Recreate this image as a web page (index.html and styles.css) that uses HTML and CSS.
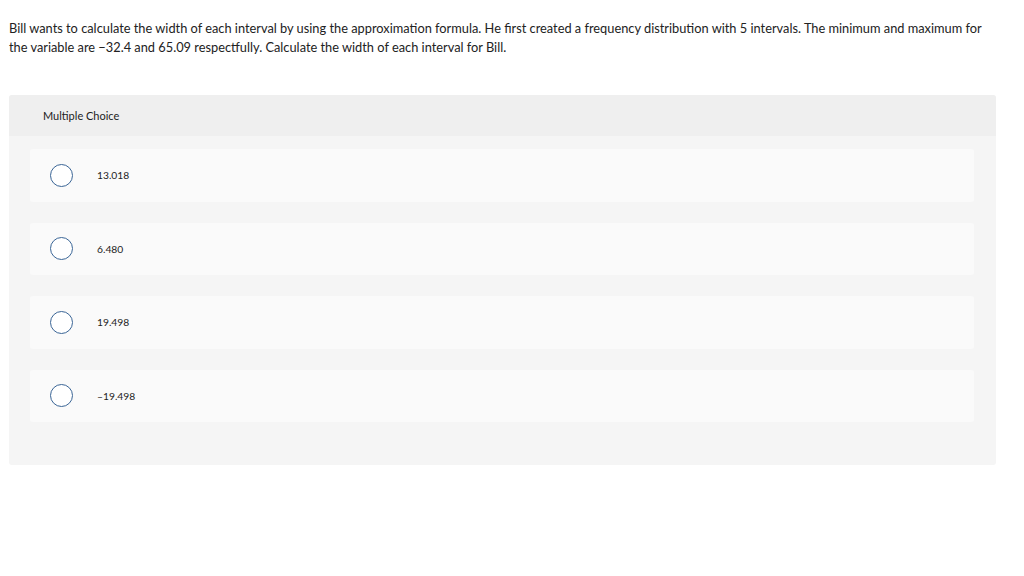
FILE: index.html
```html
<!DOCTYPE html>
<html>
<head>
<meta charset="utf-8">
<link rel="stylesheet" href="styles.css">
</head>
<body>
<div class="page">
  <p class="question">Bill wants to calculate the width of each interval by using the approximation formula. He first created a frequency distribution with 5 intervals. The minimum and maximum for the variable are &minus;32.4 and 65.09 respectfully. Calculate the width of each interval for Bill.</p>
  <div class="panel">
    <div class="panel-head">Multiple Choice</div>
    <div class="panel-body">
      <div class="option"><span class="radio"></span><span class="label">13.018</span></div>
      <div class="option"><span class="radio"></span><span class="label">6.480</span></div>
      <div class="option"><span class="radio"></span><span class="label">19.498</span></div>
      <div class="option"><span class="radio"></span><span class="label">&ndash;19.498</span></div>
    </div>
  </div>
</div>
</body>
</html>
```
FILE: styles.css
```css
html, body { margin: 0; padding: 0; background: #fff; }
body { font-family: "Lato", "Open Sans", sans-serif; color: #222; }
.page { padding: 0 28px 0 9px; }
.question {
  margin: 0;
  padding-top: 19px;
  font-size: 12.8px;
  line-height: 19px;
  color: #222;
}
.panel {
  margin-top: 38px;
  width: 987px;
  border-radius: 3px;
  overflow: hidden;
  background: #f5f5f5;
}
.panel-head {
  height: 41px;
  background: #efefef;
  display: flex;
  align-items: center;
  padding-left: 34px;
  font-size: 11px;
  color: #222;
}
.panel-body {
  padding: 13px 22px 43px 21px;
  display: flex;
  flex-direction: column;
  gap: 21px;
}
.option {
  height: 52.5px;
  background: #fafafa;
  border-radius: 3px;
  display: flex;
  align-items: center;
  padding-left: 20px;
}
.radio {
  width: 21px;
  height: 21px;
  border: 1px solid #3a6596;
  border-radius: 50%;
  background: #fff;
  flex: none;
}
.label {
  margin-left: 24px;
  font-size: 10.3px;
  color: #222;
}
```
